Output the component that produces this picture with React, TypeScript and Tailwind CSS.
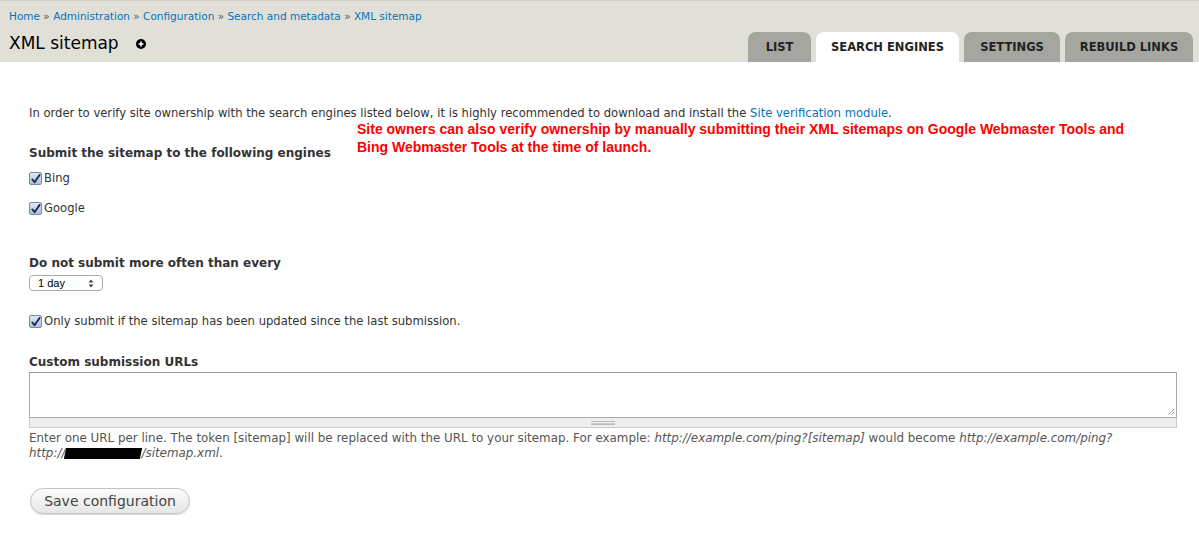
import React from "react";

const font = "font-['DejaVu_Sans','Lucida_Grande',sans-serif]";

function Check({ label }: { label: string }) {
  return (
    <label className="flex items-center gap-[2px] text-[11.6px] leading-[17px] text-[#333]">
      <span className="w-[13px] h-[13px] rounded-[2px] border border-[#7a8aa3] bg-gradient-to-b from-[#dfe8f7] to-[#a9bfe3] flex items-center justify-center">
        <svg width="12" height="12" viewBox="0 0 12 12">
          <path d="M2.5 6.5 L5 9.5 L10.5 1.5" fill="none" stroke="#1b2a48" strokeWidth="2" strokeLinecap="round" strokeLinejoin="round" />
        </svg>
      </span>
      <span>{label}</span>
    </label>
  );
}

export default function App() {
  const tabs = ["LIST", "SEARCH ENGINES", "SETTINGS", "REBUILD LINKS"];
  return (
    <div className={`w-[1199px] h-[533px] bg-white relative overflow-hidden ${font}`}>
      <div className="h-[62px] bg-[#e0e0d8] border-t border-[#d0d0c8] flex justify-between">
        <div className="pl-[9px] pt-[8px]">
          <div className="text-[10.5px] text-[#0074bd]">
            Home <span className="text-[#555]">»</span> Administration <span className="text-[#555]">»</span> Configuration <span className="text-[#555]">»</span> Search and metadata <span className="text-[#555]">»</span> XML sitemap
          </div>
          <div className="flex items-center mt-[6px]">
            <h1 className="text-[17px] text-black leading-[24px]">XML sitemap</h1>
            <span className="ml-[17px] mt-[3px] w-[10px] h-[10px] rounded-full bg-black flex items-center justify-center">
              <svg width="6" height="6" viewBox="0 0 6 6">
                <path d="M3 0.5V5.5M0.5 3H5.5" stroke="white" strokeWidth="1.6" />
              </svg>
            </span>
          </div>
        </div>
        <div className="flex items-end gap-[5px] pr-[6px]">
          {tabs.map((t) => (
            <div
              key={t}
              className={`h-[30px] rounded-t-[8px] flex items-center justify-center pt-[1px] text-[11.5px] font-bold text-[#222] ${
                t === "LIST" ? "w-[63px]" : t === "SEARCH ENGINES" ? "w-[143px]" : t === "SETTINGS" ? "w-[96px]" : "w-[128px]"
              } ${t === "SEARCH ENGINES" ? "bg-white" : "bg-[#a6a6a0]"}`}
            >
              {t}
            </div>
          ))}
        </div>
      </div>

      <div className="px-[29px] pt-[42px] text-[11.6px] text-[#333]">
        <p className="leading-[18px]">
          In order to verify site ownership with the search engines listed below, it is highly recommended to download and install the{" "}
          <span className="text-[#0074bd]">Site verification module</span>.
        </p>

        <div className="mt-[22px] font-bold text-[12px] text-[#333]">Submit the sitemap to the following engines</div>
        <div className="mt-[8px] flex flex-col gap-[13px]">
          <Check label="Bing" />
          <Check label="Google" />
        </div>

        <div className="mt-[37px] font-bold text-[12px]">Do not submit more often than every</div>
        <div className="mt-[3px] w-[74px] h-[16px] rounded-[4px] border border-[#aaa] bg-white flex items-center justify-between px-[8px] font-['Liberation_Sans',sans-serif] text-[11px] text-black">
          <span>1 day</span>
          <svg width="6" height="9" viewBox="0 0 6 9">
            <path d="M3 0.5L5.5 3.5H0.5Z M3 8.5L5.5 5.5H0.5Z" fill="#444" />
          </svg>
        </div>

        <div className="mt-[22px]">
          <Check label="Only submit if the sitemap has been updated since the last submission." />
        </div>

        <div className="mt-[23px] font-bold text-[12px]">Custom submission URLs</div>
        <div className="mt-[1px] w-[1148px]">
          <div className="h-[46px] border border-[#aaa] border-t-[#999] bg-white relative">
            <svg className="absolute right-[1px] bottom-[1px]" width="8" height="8" viewBox="0 0 8 8">
              <path d="M7 1L1 7M7 4L4 7" stroke="#555" strokeWidth="1" strokeDasharray="1 1" />
            </svg>
          </div>
          <div className="h-[10px] bg-[#eee] border border-t-0 border-[#ccc] flex items-center justify-center">
            <div className="w-[24px] h-[4px] border-y border-[#bbb] relative">
              <div className="absolute left-0 right-0 top-[1px] h-px bg-[#ccc]" />
            </div>
          </div>
        </div>

        <div className="mt-[3px] text-[11.9px] leading-[15px] text-[#555]">
          Enter one URL per line. The token [sitemap] will be replaced with the URL to your sitemap. For example:{" "}
          <em>http://example.com/ping?[sitemap]</em> would become <em>http://example.com/ping?</em>
          <br />
          <em>
            http://<span className="inline-block w-[76px] h-[11px] bg-black align-middle -skew-x-12" />/sitemap.xml
          </em>
          .
        </div>

        <button className="mt-[27px] ml-[1px] w-[160px] h-[26px] rounded-full border border-[#c4c4c4] bg-gradient-to-b from-[#fcfcfc] to-[#e6e6e6] text-[14px] text-[#444] shadow-[0_1px_1px_rgba(0,0,0,0.15)]">
          Save configuration
        </button>
      </div>

      <div className="absolute left-[357px] top-[120px] font-['Liberation_Sans',sans-serif] font-bold text-[14px] leading-[18px] text-[#ff0000]">
        Site owners can also verify ownership by manually submitting their XML sitemaps on Google Webmaster Tools and
        <br />
        Bing Webmaster Tools at the time of launch.
      </div>
    </div>
  );
}
